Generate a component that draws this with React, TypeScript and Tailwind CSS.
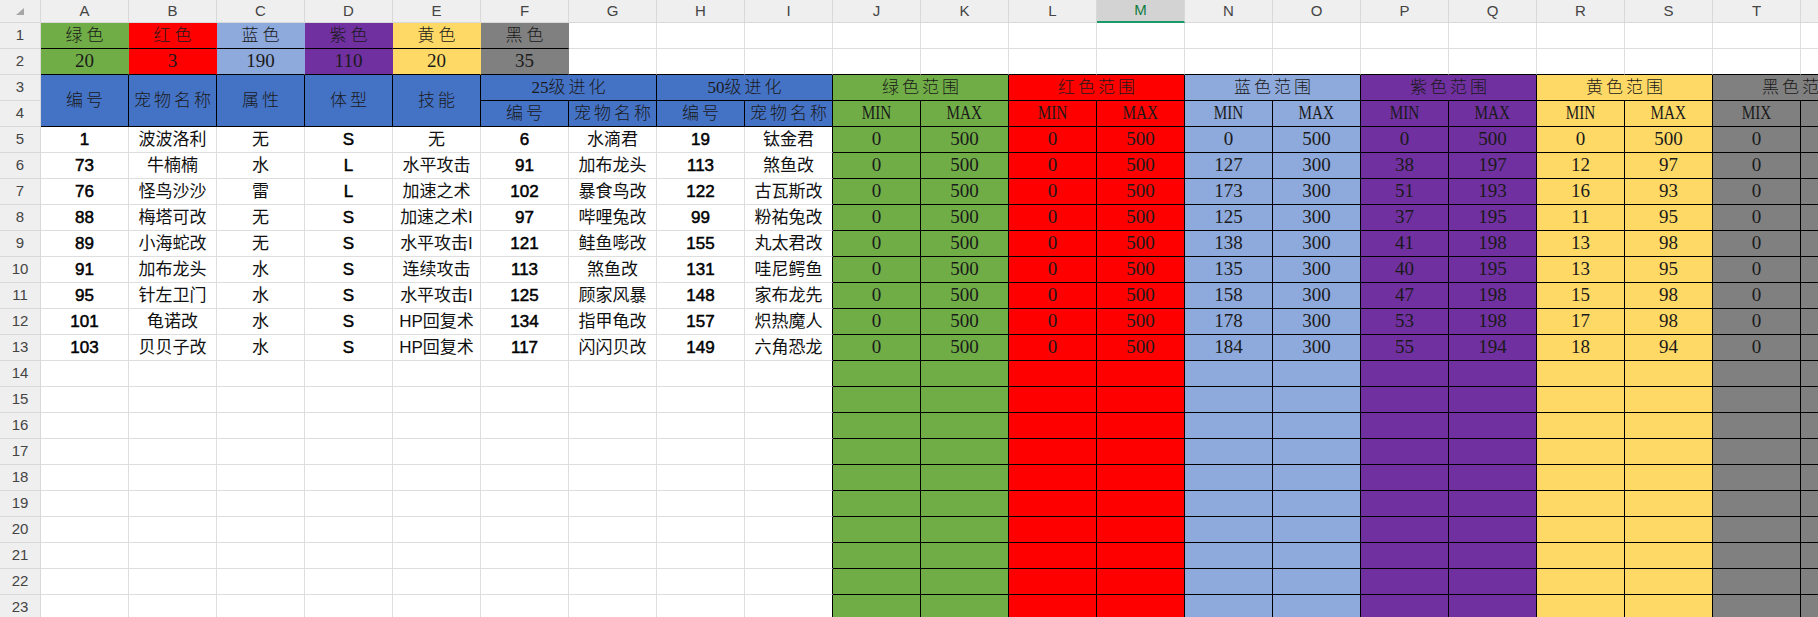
import React from "react";

// font stacks for the two kinds of cell text
const serif = "font-['Liberation_Serif','Noto_Sans_CJK_SC',serif]";
const sans = "font-['Liberation_Sans','Noto_Sans_CJK_SC',sans-serif]";

const LETTERS = "ABCDEFGHIJKLMNOPQRSTU".split("");
const BLUE = "bg-[#4472C4]";

const swatches = [
  { name: "绿色", value: "20", bg: "bg-[#70AD47]" },
  { name: "红色", value: "3", bg: "bg-[#FF0000]" },
  { name: "蓝色", value: "190", bg: "bg-[#8EA9DB]" },
  { name: "紫色", value: "110", bg: "bg-[#7030A0]" },
  { name: "黄色", value: "20", bg: "bg-[#FFD966]" },
  { name: "黑色", value: "35", bg: "bg-[#808080]" },
];

type Pet = [string, string, string, string, string, string, string, string, string];

const pets: Pet[] = [
  ["1", "波波洛利", "无", "S", "无", "6", "水滴君", "19", "钛金君"],
  ["73", "牛楠楠", "水", "L", "水平攻击", "91", "加布龙头", "113", "煞鱼改"],
  ["76", "怪鸟沙沙", "雷", "L", "加速之术", "102", "暴食鸟改", "122", "古瓦斯改"],
  ["88", "梅塔可改", "无", "S", "加速之术I", "97", "哔哩兔改", "99", "粉祐兔改"],
  ["89", "小海蛇改", "无", "S", "水平攻击I", "121", "鲑鱼嘭改", "155", "丸太君改"],
  ["91", "加布龙头", "水", "S", "连续攻击", "113", "煞鱼改", "131", "哇尼鳄鱼"],
  ["95", "针左卫门", "水", "S", "水平攻击I", "125", "顾家风暴", "148", "家布龙先"],
  ["101", "龟诺改", "水", "S", "HP回复术", "134", "指甲龟改", "157", "炽热魔人"],
  ["103", "贝贝子改", "水", "S", "HP回复术", "117", "闪闪贝改", "149", "六角恐龙"],
];

// columns holding ids / body size, drawn a little heavier
const HEAVY_COLS = [0, 3, 5, 7];

type Range = {
  label: string;
  bg: string;
  lo: string;
  hi: string;
  min: string[];
  max: string[];
};

const ranges: Range[] = [
  {
    label: "绿色范围",
    bg: "bg-[#70AD47]",
    lo: "MIN",
    hi: "MAX",
    min: Array(9).fill("0"),
    max: Array(9).fill("500"),
  },
  {
    label: "红色范围",
    bg: "bg-[#FF0000]",
    lo: "MIN",
    hi: "MAX",
    min: Array(9).fill("0"),
    max: Array(9).fill("500"),
  },
  {
    label: "蓝色范围",
    bg: "bg-[#8EA9DB]",
    lo: "MIN",
    hi: "MAX",
    min: ["0", "127", "173", "125", "138", "135", "158", "178", "184"],
    max: ["500", "300", "300", "300", "300", "300", "300", "300", "300"],
  },
  {
    label: "紫色范围",
    bg: "bg-[#7030A0]",
    lo: "MIN",
    hi: "MAX",
    min: ["0", "38", "51", "37", "41", "40", "47", "53", "55"],
    max: ["500", "197", "193", "195", "198", "195", "198", "198", "194"],
  },
  {
    label: "黄色范围",
    bg: "bg-[#FFD966]",
    lo: "MIN",
    hi: "MAX",
    min: ["0", "12", "16", "11", "13", "13", "15", "17", "18"],
    max: ["500", "97", "93", "95", "98", "95", "98", "98", "94"],
  },
  {
    label: "黑色范围",
    bg: "bg-[#808080]",
    lo: "MIX",
    hi: "MAX",
    min: Array(9).fill("0"),
    max: Array(9).fill(""),
  },
];

const cellBase =
  "h-[26px] shrink-0 border-r border-b flex items-center justify-center overflow-hidden whitespace-nowrap";

function RowNum({ n }: { n: number }) {
  return (
    <div
      className={`w-[41px] h-[26px] shrink-0 bg-[#EFEFEF] border-r border-b border-[#D9D9D9] flex items-center justify-center text-[15px] text-[#444] ${sans}`}
    >
      {n}
    </div>
  );
}

function Narrow({ children }: { children: React.ReactNode }) {
  return <span className="inline-block scale-x-[0.8]">{children}</span>;
}

// level titles keep the digits tight and space out the CJK part
function LevelTitle({ level }: { level: string }) {
  return (
    <span>
      {level}
      <span className="tracking-[3px]">级进化</span>
    </span>
  );
}

function ColumnHeader() {
  return (
    <div className="flex">
      <div className="w-[41px] h-[23px] shrink-0 bg-[#EFEFEF] border-r border-b border-[#D9D9D9] flex items-center justify-center">
        <svg width="8" height="7" viewBox="0 0 8 7">
          <polygon points="8,0 8,7 0,7" fill="#A6A6A6" />
        </svg>
      </div>
      {LETTERS.map((l) =>
        l === "M" ? (
          <div
            key={l}
            className={`w-[88px] h-[23px] shrink-0 bg-[#D3D3D3] border-r border-[#D9D9D9] border-b-2 border-b-[#1A9A68] flex items-center justify-center text-[15px] text-[#107C41] ${sans}`}
          >
            {l}
          </div>
        ) : (
          <div
            key={l}
            className={`w-[88px] h-[23px] shrink-0 bg-[#EFEFEF] border-r border-b border-[#D9D9D9] flex items-center justify-center text-[15px] text-[#444] ${sans}`}
          >
            {l}
          </div>
        ),
      )}
    </div>
  );
}

function SwatchRow({ n, field }: { n: number; field: "name" | "value" }) {
  return (
    <div className="flex">
      <RowNum n={n} />
      {swatches.map((s) => (
        <div
          key={s.name}
          className={`${cellBase} w-[88px] ${s.bg} border-r-transparent border-b-black text-[#1a1a1a] font-light ${serif} ${
            field === "name"
              ? "text-[17px] tracking-[4px] pl-[4px]"
              : "text-[19px]"
          }`}
        >
          {s[field]}
        </div>
      ))}
      {LETTERS.slice(6).map((l) => (
        <div
          key={l}
          className={`${cellBase} w-[88px] border-r-[#DEDEDE] ${
            field === "value" ? "border-b-black" : "border-b-[#DEDEDE]"
          }`}
        />
      ))}
    </div>
  );
}

function TitleBlock() {
  const label = `text-[17px] text-[#1a1a1a] font-light ${serif}`;
  const spaced = "tracking-[3px] pl-[3px]";
  return (
    <div className="flex">
      <div className="flex flex-col">
        <RowNum n={3} />
        <RowNum n={4} />
      </div>
      {["编号", "宠物名称", "属性", "体型", "技能"].map((t) => (
        <div
          key={t}
          className={`w-[88px] h-[52px] shrink-0 border-r border-b border-black flex items-center justify-center ${BLUE} ${label} ${spaced}`}
        >
          {t}
        </div>
      ))}
      <div className="flex flex-col">
        <div className="flex">
          {["25", "50"].map((lv) => (
            <div
              key={lv}
              className={`${cellBase} w-[176px] border-black ${BLUE} ${label} pl-[3px]`}
            >
              <LevelTitle level={lv} />
            </div>
          ))}
        </div>
        <div className="flex">
          {["编号", "宠物名称", "编号", "宠物名称"].map((t, i) => (
            <div
              key={i}
              className={`${cellBase} w-[88px] border-black ${BLUE} ${label} ${spaced}`}
            >
              {t}
            </div>
          ))}
        </div>
      </div>
      {ranges.map((r) => (
        <div key={r.label} className="flex flex-col">
          <div
            className={`${cellBase} w-[176px] border-black ${r.bg} ${label} ${spaced}`}
          >
            {r.label}
          </div>
          <div className="flex">
            {[r.lo, r.hi].map((t) => (
              <div
                key={t}
                className={`${cellBase} w-[88px] border-black ${r.bg} text-[19px] text-[#1a1a1a] ${serif}`}
              >
                <Narrow>{t}</Narrow>
              </div>
            ))}
          </div>
        </div>
      ))}
    </div>
  );
}

function DataRow({ n, pet, idx }: { n: number; pet?: Pet; idx: number }) {
  const cols = pet ?? (Array(9).fill("") as string[]);
  return (
    <div className="flex">
      <RowNum n={n} />
      {cols.map((v, i) => (
        <div
          key={i}
          className={`${cellBase} w-[88px] bg-white border-b-[#DEDEDE] ${
            i === 8 ? "border-r-black" : "border-r-[#DEDEDE]"
          } text-[17px] ${sans} ${
            HEAVY_COLS.includes(i)
              ? "text-black [-webkit-text-stroke:0.5px_#000]"
              : "text-[#111]"
          }`}
        >
          {v}
        </div>
      ))}
      {ranges.map((r) => (
        <React.Fragment key={r.label}>
          <div
            className={`${cellBase} w-[88px] border-black ${r.bg} text-[19px] text-[#1a1a1a] ${serif}`}
          >
            {pet ? r.min[idx] : ""}
          </div>
          <div
            className={`${cellBase} w-[88px] border-black ${r.bg} text-[19px] text-[#1a1a1a] ${serif}`}
          >
            {pet ? r.max[idx] : ""}
          </div>
        </React.Fragment>
      ))}
    </div>
  );
}

export default function App() {
  const rows = Array.from({ length: 19 }, (_, i) => i);
  return (
    <div className="w-[1818px] h-[617px] overflow-hidden bg-white">
      <div className="flex flex-col w-max">
        <ColumnHeader />
        <SwatchRow n={1} field="name" />
        <SwatchRow n={2} field="value" />
        <TitleBlock />
        {rows.map((i) => (
          <DataRow key={i} n={i + 5} pet={pets[i]} idx={i} />
        ))}
      </div>
    </div>
  );
}
